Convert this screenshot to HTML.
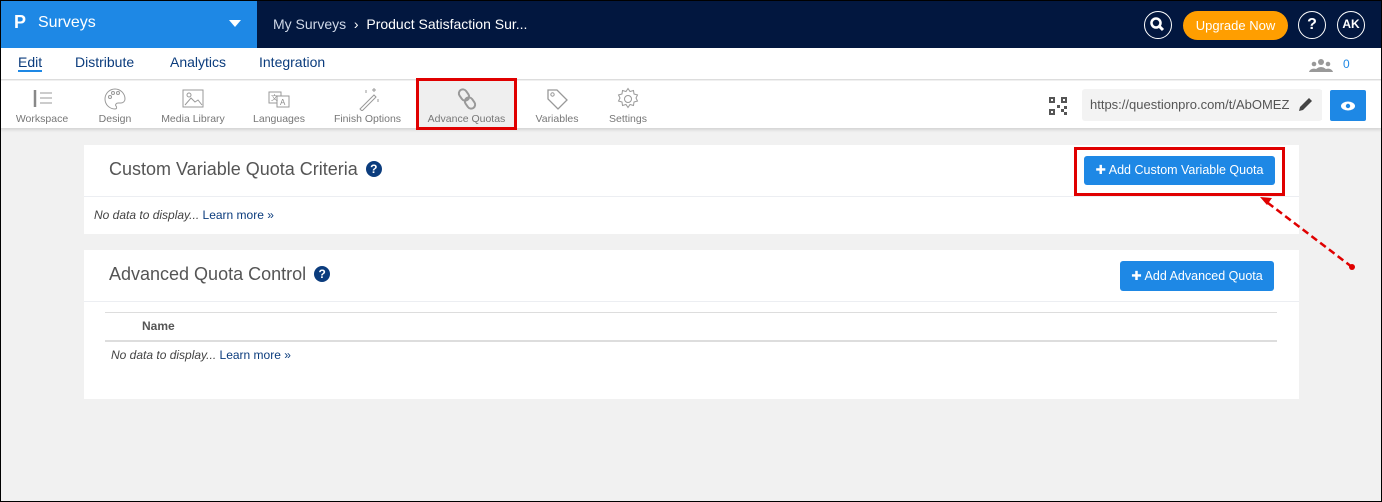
<!DOCTYPE html>
<html><head><meta charset="utf-8"><style>
*{box-sizing:border-box;margin:0;padding:0}
body{width:1382px;height:502px;overflow:hidden;background:#f1f1f1;font-family:"Liberation Sans",sans-serif;position:relative}
.frame{position:absolute;inset:0;border:1px solid #000;z-index:50;pointer-events:none}
.a{position:absolute}
.top{left:0;top:0;width:1382px;height:48px;background:#02173f}
.brand{left:0;top:0;width:257px;height:48px;background:#1e88e5;color:#fff}
.sub{left:0;top:48px;width:1382px;height:32px;background:#fff;border-bottom:1px solid #ddd}
.tool{left:0;top:81px;width:1382px;height:47px;background:#fff;box-shadow:0 2px 3px rgba(0,0,0,.12)}
.ti{position:absolute;top:0;height:47px;text-align:center;font-size:10.5px;color:#777}
.ti span{position:absolute;left:0;right:0;top:32px}
.ti svg{position:absolute;top:6px;left:50%;margin-left:-12px}
.card{background:#fff;left:84px;width:1215px}
.h{font-size:18px;color:#555;font-weight:300}
.q{display:inline-block;width:16px;height:16px;border-radius:50%;background:#0b3c7d;color:#fff;font-size:12px;font-weight:bold;text-align:center;line-height:16px;vertical-align:2px;margin-left:8px}
.btn{background:#1e88e5;color:#fff;font-size:12.5px;border-radius:3px;text-align:center}
.nd{font-size:12px;color:#333}
.nd i{color:#444}.nd b{font-weight:normal;color:#0b3c7d}
</style></head><body>
<div class="frame"></div>
<div class="a top"></div>
<div class="a brand">
 <div class="a" style="left:14px;top:12px;font-size:18px;font-weight:bold">P</div>
 <div class="a" style="left:38px;top:14px;font-size:16px">Surveys</div>
 <div class="a" style="left:229px;top:20px;width:0;height:0;border-left:6px solid transparent;border-right:6px solid transparent;border-top:7px solid #fff"></div>
</div>
<div class="a" style="left:273px;top:16px;color:#cfd8e8;font-size:14px">My Surveys &nbsp;<span style="color:#fff">›</span>&nbsp; <span style="color:#fff">Product Satisfaction Sur...</span></div>
<div class="a" style="left:1144px;top:11px;width:28px;height:28px;border:1.5px solid #fff;border-radius:50%"><svg width="25" height="25" viewBox="0 0 25 25"><circle cx="11" cy="11" r="4.5" stroke="#fff" stroke-width="2.5" fill="none"/><line x1="14" y1="14" x2="18" y2="18" stroke="#fff" stroke-width="3"/></svg></div>
<div class="a" style="left:1183px;top:11px;width:105px;height:29px;background:#ff9e00;border-radius:15px;color:#fff;font-size:13px;text-align:center;line-height:29px">Upgrade Now</div>
<div class="a" style="left:1298px;top:11px;width:28px;height:28px;border:1.5px solid #fff;border-radius:50%;color:#fff;font-weight:bold;font-size:16px;text-align:center;line-height:25px">?</div>
<div class="a" style="left:1337px;top:11px;width:28px;height:28px;border:1.5px solid #fff;border-radius:50%;color:#fff;font-weight:bold;font-size:12px;text-align:center;line-height:25px">AK</div>

<div class="a sub">
 <div class="a" style="left:18px;top:6px;font-size:14px;color:#0b3c7d;border-bottom:2px solid #1e88e5;line-height:16px">Edit</div>
 <div class="a" style="left:75px;top:6px;font-size:14px;color:#0b3c7d">Distribute</div>
 <div class="a" style="left:170px;top:6px;font-size:14px;color:#0b3c7d">Analytics</div>
 <div class="a" style="left:259px;top:6px;font-size:14px;color:#0b3c7d">Integration</div>
 <svg class="a" style="left:1309px;top:10px" width="24" height="14" viewBox="0 0 24 14"><circle cx="12" cy="4" r="3" fill="#999"/><circle cx="5" cy="6" r="2.3" fill="#999"/><circle cx="19" cy="6" r="2.3" fill="#999"/><path d="M6 14a6 5 0 0 1 12 0z" fill="#999"/><path d="M0 14a5 4 0 0 1 7-3v3z M24 14a5 4 0 0 0-7-3v3z" fill="#999"/></svg>
 <div class="a" style="left:1343px;top:9px;font-size:12px;color:#1e88e5">0</div>
</div>

<div class="a tool">
 <div class="ti" style="left:12px;width:60px"><svg width="24" height="24"><line x1="5" y1="3" x2="5" y2="20" stroke="#888" stroke-width="2.5"/><path d="M10 6h12M10 11h12M10 16h12" stroke="#999"/></svg><span>Workspace</span></div>
 <div class="ti" style="left:90px;width:50px"><svg width="24" height="24"><path d="M12 2a10 10 0 1 0 0 20c2 0 2-2 1-3s0-3 2-3h3a4 4 0 0 0 4-4A10 10 0 0 0 12 2z" fill="none" stroke="#999"/><circle cx="7" cy="10" r="1.5" fill="none" stroke="#999"/><circle cx="10" cy="6" r="1.5" fill="none" stroke="#999"/><circle cx="15" cy="6" r="1.5" fill="none" stroke="#999"/></svg><span>Design</span></div>
 <div class="ti" style="left:157px;width:72px"><svg width="24" height="24"><rect x="2" y="3" width="20" height="17" fill="none" stroke="#999"/><path d="M4 18l6-7 4 4 3-2 4 5" fill="none" stroke="#999"/><circle cx="8" cy="8" r="2" fill="none" stroke="#999"/></svg><span>Media Library</span></div>
 <div class="ti" style="left:250px;width:58px"><svg width="24" height="24"><rect x="2" y="5" width="12" height="11" fill="none" stroke="#999"/><rect x="10" y="9" width="12" height="11" fill="#fff" stroke="#999"/><text x="13" y="18" font-size="8" fill="#888" font-family="Liberation Sans">A</text><text x="4" y="13" font-size="7" fill="#888">文</text></svg><span>Languages</span></div>
 <div class="ti" style="left:330px;width:75px"><svg width="24" height="24"><path d="M4 22L18 8l2 2L6 24z" fill="none" stroke="#999"/><path d="M18 1v4M16 3h4M10 3v3M22 12v3" stroke="#999"/></svg><span>Finish Options</span></div>
 <div class="ti" style="left:418px;width:97px;background:#efefef"><svg width="24" height="24"><rect x="5" y="2" width="8" height="12" rx="4" fill="none" stroke="#999" stroke-width="2" transform="rotate(-35 9 8)"/><rect x="11" y="10" width="8" height="12" rx="4" fill="none" stroke="#999" stroke-width="2" transform="rotate(-35 15 16)"/></svg><span>Advance Quotas</span></div>
 <div class="ti" style="left:530px;width:54px"><svg width="24" height="24"><path d="M3 3h9l10 10-9 9L3 12z" fill="none" stroke="#999" stroke-width="1.3"/><circle cx="7.5" cy="7.5" r="1.7" fill="none" stroke="#999"/></svg><span>Variables</span></div>
 <div class="ti" style="left:603px;width:50px"><svg width="24" height="24"><circle cx="12" cy="12" r="3.5" fill="none" stroke="#999"/><path d="M12 1.5l2 3 3.5-1 .5 3.5 3.5 1-1.5 3 1.5 3-3.5 1-.5 3.5-3.5-1-2 3-2-3-3.5 1-.5-3.5-3.5-1 1.5-3-1.5-3 3.5-1 .5-3.5 3.5 1z" fill="none" stroke="#999"/></svg><span>Settings</span></div>
 <svg class="a" style="left:1049px;top:16px" width="18" height="18" viewBox="0 0 18 18" fill="#555"><rect x="0" y="0" width="6" height="6"/><rect x="2" y="2" width="2" height="2" fill="#fff"/><rect x="12" y="0" width="6" height="6"/><rect x="14" y="2" width="2" height="2" fill="#fff"/><rect x="0" y="12" width="6" height="6"/><rect x="2" y="14" width="2" height="2" fill="#fff"/><rect x="8" y="8" width="3" height="3"/><rect x="12" y="12" width="3" height="3"/><rect x="15" y="15" width="3" height="3"/><rect x="15" y="9" width="3" height="3"/></svg>
 <div class="a" style="left:1082px;top:8px;width:240px;height:32px;background:#f3f3f3;border-radius:3px;font-size:13px;color:#555;line-height:32px;padding-left:8px;overflow:hidden;white-space:nowrap">https://questionpro.com/t/AbOMEZ8</div>
 <div class="a" style="left:1290px;top:9px;width:32px;height:30px;background:#f3f3f3"><svg width="30" height="30"><path d="M9 21l1-4 9-9 3 3-9 9z" fill="#444"/></svg></div>
 <div class="a" style="left:1330px;top:9px;width:36px;height:31px;background:#1e88e5;border-radius:2px"><svg width="36" height="31"><ellipse cx="18" cy="16" rx="7" ry="4.5" fill="#fff"/><circle cx="18" cy="16" r="2.2" fill="#1e88e5"/></svg></div>
</div>
<div class="a" style="left:416px;top:78px;width:101px;height:52px;border:3px solid #e00000"></div>

<div class="a card" style="top:145px;height:89px">
 <div class="a h" style="left:25px;top:14px">Custom Variable Quota Criteria<span class="q">?</span></div>
 <div class="a" style="left:0;top:51px;width:1215px;border-top:1px solid #eceef2"></div>
 <div class="a nd" style="left:10px;top:63px"><i>No data to display...</i> <b>Learn more »</b></div>
</div>
<div class="a btn" style="left:1084px;top:156px;width:191px;height:29px;line-height:29px">✚ Add Custom Variable Quota</div>
<div class="a" style="left:1074px;top:147px;width:211px;height:49px;border:3px solid #e00000"></div>

<div class="a card" style="top:250px;height:149px">
 <div class="a h" style="left:25px;top:14px">Advanced Quota Control<span class="q">?</span></div>
 <div class="a" style="left:0;top:51px;width:1215px;border-top:1px solid #eceef2"></div>
 <div class="a" style="left:21px;top:62px;width:1172px;border-top:1px solid #ddd"></div>
 <div class="a" style="left:58px;top:69px;font-size:12px;font-weight:bold;color:#555">Name</div>
 <div class="a" style="left:21px;top:90px;width:1172px;border-top:2px solid #ddd"></div>
 <div class="a nd" style="left:27px;top:98px"><i>No data to display...</i> <b>Learn more »</b></div>
</div>
<div class="a btn" style="left:1120px;top:261px;width:154px;height:30px;line-height:30px">✚ Add Advanced Quota</div>

<svg class="a" style="left:0;top:0" width="1382" height="502"><line x1="1352" y1="267" x2="1268" y2="203" stroke="#e00000" stroke-width="2.5" stroke-dasharray="7,4"/><path d="M1260 197l12 1-5 7z" fill="#e00000"/><circle cx="1352" cy="267" r="3" fill="#e00000"/></svg>
</body></html>
